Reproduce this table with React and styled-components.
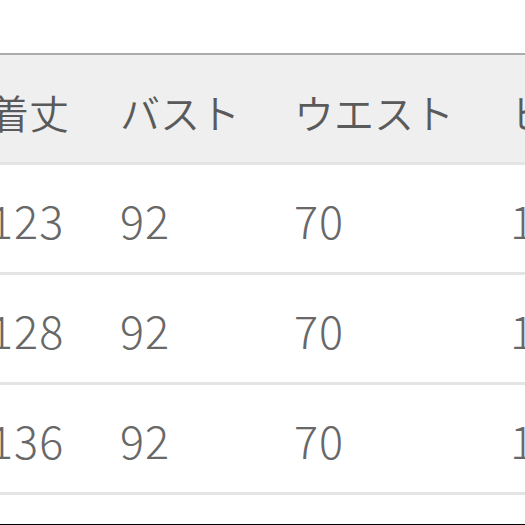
import React from 'react'
import styled, { createGlobalStyle } from 'styled-components'

const Global = createGlobalStyle`
  html, body { margin: 0; padding: 0; background: #fff; }
  body { overflow: hidden; }
`;

const Page = styled.div`
  box-sizing: border-box;
  width: 525px;
  height: 525px;
  padding-top: 53px;
  border-bottom: 1px solid #000;
  overflow: hidden;
  font-family: "Noto Sans CJK JP", "Noto Sans", sans-serif;
`;

const Table = styled.div`
  border-top: 2px solid #acacac;
  margin-left: -11px;
  width: 700px;
`;

const Row = styled.div`
  display: flex;
  align-items: center;
  height: 107px;
  border-bottom: 3px solid #e4e4e4;
  background: ${p => (p.head ? '#efefef' : '#fff')};
`;

const Cell = styled.div`
  box-sizing: border-box;
  width: ${p => p.w}px;
  flex: none;
  padding-top: ${p => (p.head ? 6 : 2)}px;
  color: ${p => (p.head ? '#5a5a5a' : '#686868')};
  font-size: ${p => (p.head ? 40 : 45)}px;
  font-weight: ${p => (p.head ? 350 : 300)};
  letter-spacing: ${p => (p.head ? 0 : 1)}px;
  line-height: 1;
  white-space: nowrap;
`;

const widths = [131, 174, 216, 180];
const head = ['着丈', 'バスト', 'ウエスト', 'ヒップ'];
const rows = [
  ['123', '92', '70', '100'],
  ['128', '92', '70', '100'],
  ['136', '92', '70', '100'],
];

export default function App() {
  return (
    <Page>
      <Global />
      <Table>
        <Row head>
          {head.map((t, i) => (
            <Cell head w={widths[i]} key={i}>{t}</Cell>
          ))}
        </Row>
        {rows.map((r, j) => (
          <Row key={j}>
            {r.map((t, i) => (
              <Cell w={widths[i]} key={i}>{t}</Cell>
            ))}
          </Row>
        ))}
      </Table>
    </Page>
  )
}
